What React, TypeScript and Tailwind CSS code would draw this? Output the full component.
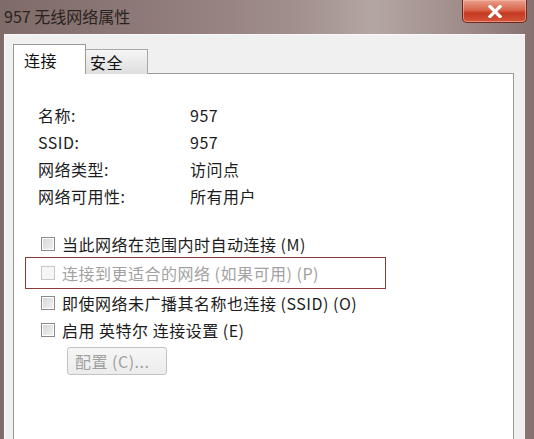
const FONT = "font-['Noto_Sans_CJK_SC','Noto_Sans',sans-serif]";

function Checkbox({ disabled }: { disabled?: boolean }) {
  return (
    <span
      className={`w-[14px] h-[14px] shrink-0 border ${
        disabled
          ? "border-[#c8c8c8] bg-[#f6f6f6]"
          : "border-[#8a8a8a] bg-[linear-gradient(135deg,#d6d6d6,#f2f2f2)] shadow-[inset_0_0_0_1px_#ffffff]"
      }`}
    />
  );
}

function CheckRow({ label, disabled }: { label: string; disabled?: boolean }) {
  return (
    <div className="h-[27px] flex items-center gap-[7px]">
      <Checkbox disabled={disabled} />
      <span className={disabled ? "text-[#a2a2a2]" : "text-[#1c1c1c]"}>{label}</span>
    </div>
  );
}

const info = [
  ["名称:", "957"],
  ["SSID:", "957"],
  ["网络类型:", "访问点"],
  ["网络可用性:", "所有用户"],
];

export default function App() {
  return (
    <div
      className={`w-[534px] h-[439px] overflow-hidden flex flex-col bg-[linear-gradient(90deg,#7f6b68_0%,#8f7b78_30%,#a18f8c_55%,#b4a6a3_70%,#9d8a87_88%,#86716e_100%)] ${FONT} text-[16px] tracking-[0.5px]`}
    >
      {/* title bar */}
      <div className="h-[34px] flex justify-between shrink-0">
        <div className="pl-[4px] pt-[4px] text-[#2a2321] text-[16px] tracking-normal">957 无线网络属性</div>
        <div className="mr-[7px] w-[65px] h-[23px] rounded-b-[5px] border border-t-0 border-[#6e2a22] bg-[linear-gradient(180deg,#e8a08c_0%,#d9664d_45%,#c4391f_60%,#d4563c_100%)] flex items-center justify-center shadow-[inset_0_0_0_1px_rgba(255,200,180,0.5)]">
          <svg width="16" height="13" viewBox="0 0 16 13">
            <path d="M3 1.5 L13 11.5 M13 1.5 L3 11.5" stroke="#fff" strokeWidth="3.2" strokeLinecap="square" />
          </svg>
        </div>
      </div>

      {/* window body */}
      <div className="flex-1 ml-[4px] mr-[9px] flex flex-col bg-[#f0f0f0] border-t border-l border-[#fafafa] pl-[8px] pr-[11px] pt-[9px]">
        {/* tabs */}
        <div className="flex items-end h-[30px] shrink-0 relative z-10 -mb-px">
          <div className="w-[73px] h-[30px] bg-white border border-b-0 border-[#9a9a9a] flex items-center pl-[10px] text-[#111]">
            连接
          </div>
          <div className="w-[62px] h-[25px] border border-l-0 border-b-0 border-[#a8a8a8] bg-[linear-gradient(180deg,#f5f5f5,#dedede)] flex items-center pl-[4px] text-[#111]">
            安全
          </div>
        </div>

        {/* tab panel */}
        <div className="flex-1 bg-white border border-[#9a9a9a] border-b-0 pl-[24px] pt-[27px]">
          <div className="flex flex-col">
            {info.map(([k, v]) => (
              <div key={k} className="h-[27px] flex items-center text-[#1c1c1c]">
                <span className="w-[152px]">{k}</span>
                <span>{v}</span>
              </div>
            ))}
          </div>

          <div className="mt-[21px] flex flex-col">
            <div className="pl-[3px]">
              <CheckRow label="当此网络在范围内时自动连接 (M)" />
            </div>
            <div className="-ml-[13px] w-[361px] h-[32px] border border-[#8a3a3a] pl-[15px] flex items-center">
              <div className="flex items-center gap-[7px]">
                <Checkbox disabled />
                <span className="text-[#a2a2a2]">连接到更适合的网络 (如果可用) (P)</span>
              </div>
            </div>
            <div className="pl-[3px]">
              <CheckRow label="即使网络未广播其名称也连接 (SSID) (O)" />
              <CheckRow label="启用 英特尔 连接设置 (E)" />
            </div>
            <div className="mt-[4px] ml-[29px] w-[100px] h-[28px] rounded-[3px] border border-[#c2c2c2] bg-[linear-gradient(180deg,#f6f6f6,#ececec)] flex items-center pl-[7px] text-[#a0a0a0]">
              配置 (C)...
            </div>
          </div>
        </div>
      </div>
    </div>
  );
}
